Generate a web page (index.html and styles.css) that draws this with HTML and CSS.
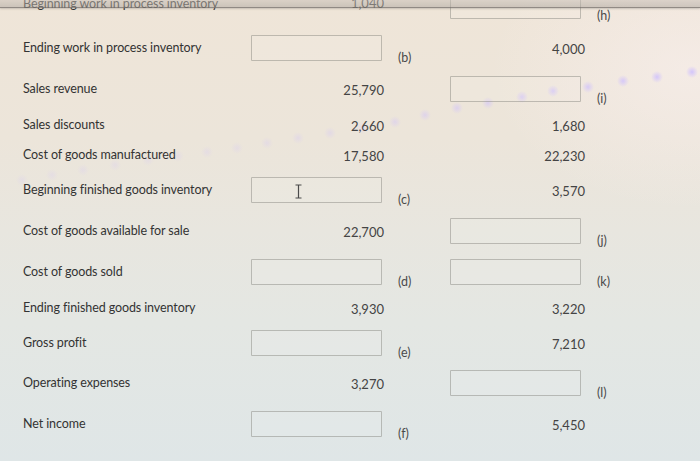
FILE: index.html
```html
<!DOCTYPE html>
<html lang="en">
<head>
<meta charset="utf-8">
<title>Cost of goods manufactured</title>
<link rel="stylesheet" href="styles.css">
</head>
<body>
<div class="sheet">
  <div class="row h42 row-top">
    <div class="label">Beginning work in process inventory</div>
    <div class="num">1,040</div>
    <div class="mark"></div>
    <div class="cell"><div class="box"></div></div>
    <div class="mark">(h)</div>
  </div>
  <div class="row h42">
    <div class="label">Ending work in process inventory</div>
    <div class="cell"><div class="box"></div></div>
    <div class="mark">(b)</div>
    <div class="num">4,000</div>
    <div class="mark"></div>
  </div>
  <div class="row h40">
    <div class="label">Sales revenue</div>
    <div class="num">25,790</div>
    <div class="mark"></div>
    <div class="cell"><div class="box"></div></div>
    <div class="mark">(i)</div>
  </div>
  <div class="row h32">
    <div class="label">Sales discounts</div>
    <div class="num">2,660</div>
    <div class="mark"></div>
    <div class="num">1,680</div>
    <div class="mark"></div>
  </div>
  <div class="row h28">
    <div class="label">Cost of goods manufactured</div>
    <div class="num">17,580</div>
    <div class="mark"></div>
    <div class="num">22,230</div>
    <div class="mark"></div>
  </div>
  <div class="row h42">
    <div class="label">Beginning finished goods inventory</div>
    <div class="cell"><div class="box box-cursor"><svg class="ibeam" width="7" height="15" viewBox="0 0 7 15"><path d="M0.5 1h6M3.5 1v13M0.5 14h6" fill="none" stroke="#4a4a4a" stroke-width="1.2"/></svg></div></div>
    <div class="mark">(c)</div>
    <div class="num">3,570</div>
    <div class="mark"></div>
  </div>
  <div class="row h40">
    <div class="label">Cost of goods available for sale</div>
    <div class="num">22,700</div>
    <div class="mark"></div>
    <div class="cell"><div class="box"></div></div>
    <div class="mark">(j)</div>
  </div>
  <div class="row h42">
    <div class="label">Cost of goods sold</div>
    <div class="cell"><div class="box"></div></div>
    <div class="mark">(d)</div>
    <div class="cell"><div class="box"></div></div>
    <div class="mark">(k)</div>
  </div>
  <div class="row h30">
    <div class="label">Ending finished goods inventory</div>
    <div class="num">3,930</div>
    <div class="mark"></div>
    <div class="num">3,220</div>
    <div class="mark"></div>
  </div>
  <div class="row h40">
    <div class="label">Gross profit</div>
    <div class="cell"><div class="box"></div></div>
    <div class="mark">(e)</div>
    <div class="num">7,210</div>
    <div class="mark"></div>
  </div>
  <div class="row h40">
    <div class="label">Operating expenses</div>
    <div class="num">3,270</div>
    <div class="mark"></div>
    <div class="cell"><div class="box"></div></div>
    <div class="mark">(l)</div>
  </div>
  <div class="row h42">
    <div class="label">Net income</div>
    <div class="cell"><div class="box"></div></div>
    <div class="mark">(f)</div>
    <div class="num">5,450</div>
    <div class="mark"></div>
  </div>
</div>
</body>
</html>
```

FILE: styles.css
```css
html {
  height: 100%;
  background-color: #e8e6df;
  background-image:
    radial-gradient(circle 6px at 692px 72px, rgba(205,190,255,0.85), rgba(205,190,255,0)),
    radial-gradient(circle 6px at 657px 77px, rgba(205,190,255,0.8), rgba(205,190,255,0)),
    radial-gradient(circle 6px at 623px 81px, rgba(205,190,255,0.75), rgba(205,190,255,0)),
    radial-gradient(circle 6px at 588px 87px, rgba(205,190,255,0.7), rgba(205,190,255,0)),
    radial-gradient(circle 6px at 553px 91px, rgba(205,190,255,0.65), rgba(205,190,255,0)),
    radial-gradient(circle 6px at 522px 97px, rgba(205,190,255,0.6), rgba(205,190,255,0)),
    radial-gradient(circle 6px at 488px 103px, rgba(205,190,255,0.55), rgba(205,190,255,0)),
    radial-gradient(circle 6px at 457px 108px, rgba(205,190,255,0.5), rgba(205,190,255,0)),
    radial-gradient(circle 6px at 425px 115px, rgba(205,190,255,0.45), rgba(205,190,255,0)),
    radial-gradient(circle 6px at 395px 122px, rgba(205,190,255,0.4), rgba(205,190,255,0)),
    radial-gradient(circle 6px at 362px 128px, rgba(205,190,255,0.3), rgba(205,190,255,0)),
    radial-gradient(circle 6px at 330px 133px, rgba(205,190,255,0.3), rgba(205,190,255,0)),
    radial-gradient(circle 6px at 298px 138px, rgba(205,190,255,0.28), rgba(205,190,255,0)),
    radial-gradient(circle 6px at 267px 143px, rgba(205,190,255,0.25), rgba(205,190,255,0)),
    radial-gradient(circle 6px at 237px 148px, rgba(205,190,255,0.22), rgba(205,190,255,0)),
    radial-gradient(circle 6px at 207px 152px, rgba(205,190,255,0.22), rgba(205,190,255,0)),
    radial-gradient(circle 6px at 178px 156px, rgba(205,190,255,0.2), rgba(205,190,255,0)),
    radial-gradient(circle 6px at 148px 160px, rgba(205,190,255,0.2), rgba(205,190,255,0)),
    radial-gradient(circle 6px at 115px 165px, rgba(205,190,255,0.2), rgba(205,190,255,0)),
    radial-gradient(circle 6px at 83px 170px, rgba(205,190,255,0.2), rgba(205,190,255,0)),
    radial-gradient(circle 6px at 52px 175px, rgba(205,190,255,0.2), rgba(205,190,255,0)),
    radial-gradient(circle 6px at 22px 180px, rgba(205,190,255,0.2), rgba(205,190,255,0)),
    radial-gradient(ellipse 200px 140px at 690px 70px, rgba(250,240,240,0.55), rgba(250,240,240,0)),
    linear-gradient(180deg, #efe5d8 0%, #ece5da 30%, #e8e6df 50%, #e4e7e3 70%, #dfe6e7 100%);
}

body {
  margin: 0;
  height: 461px;
  overflow: hidden;
  font-family: Lato, "Open Sans", sans-serif;
  font-size: 13px;
  color: #363636;
}

body::before {
  content: "";
  position: fixed;
  top: 0;
  left: 0;
  right: 0;
  height: 7px;
  background: linear-gradient(180deg, rgba(200,192,184,0.55), rgba(170,163,156,0.5));
  border-bottom: 1px solid rgba(95,90,86,0.6);
  box-shadow: 0 1px 2px rgba(80,75,70,0.25);
  z-index: 2;
}

.sheet {
  margin-top: -15px;
  padding-left: 23px;
}

.row {
  display: grid;
  grid-template-columns: 228px 133px 66px 135px 1fr;
  align-items: center;
}

.h42 { height: 42px; }
.h40 { height: 40px; }
.h32 { height: 32px; }
.h30 { height: 30px; }
.h28 { height: 28px; }

.label {
  color: #333;
  font-size: 12.5px;
  letter-spacing: -0.1px;
  margin-top: -2px;
}

.num {
  text-align: right;
  color: #444;
  margin-top: 2px;
}

.row-top .label,
.row-top .num {
  margin-top: -6px;
}

.mark {
  padding-left: 14px;
  color: #4a4a4a;
  font-size: 12.5px;
  margin-top: 18px;
}

.row > .mark:last-child {
  padding-left: 12px;
}

.cell {
  display: flex;
  align-items: center;
}

.box {
  box-sizing: border-box;
  width: 131px;
  height: 26px;
  border: 1px solid rgba(120,118,112,0.42);
  border-radius: 1px;
  background: rgba(255,255,255,0.08);
  display: flex;
  align-items: center;
}

.box-cursor {
  padding-left: 43px;
  padding-top: 3px;
}

.ibeam {
  display: block;
}
```
